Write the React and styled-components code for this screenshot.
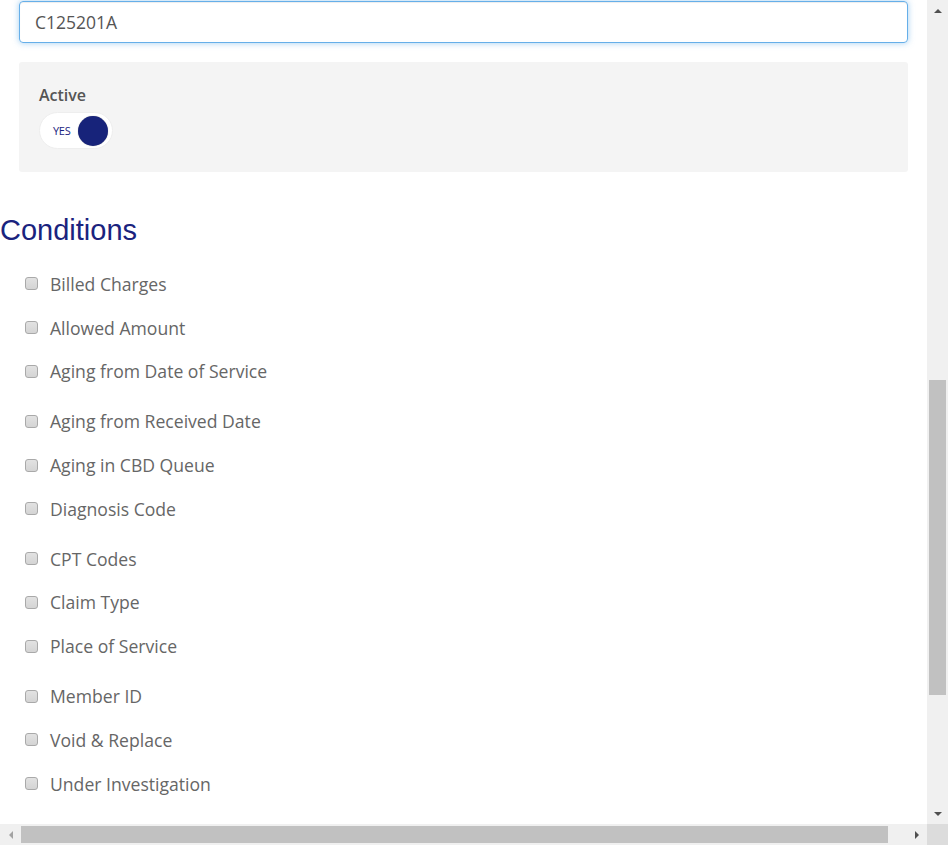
import styled, { createGlobalStyle } from "styled-components";

const GlobalStyle = createGlobalStyle`
  html, body {
    margin: 0;
    padding: 0;
    overflow: hidden;
    background: #fff;
  }
  * {
    box-sizing: border-box;
  }
`;

const Frame = styled.div`
  display: grid;
  grid-template-columns: 927px 21px;
  grid-template-rows: 824px 21px;
  width: 948px;
  height: 845px;
`;

const Viewport = styled.div`
  overflow: hidden;
  font-family: "Open Sans", "Liberation Sans", sans-serif;
`;

const VTrack = styled.div`
  background: #f0f0f0;
  display: grid;
  grid-template-rows: 21px 1fr 21px;
  justify-items: center;
  align-items: center;
`;

const HTrack = styled.div`
  background: #f0f0f0;
  display: grid;
  grid-template-columns: 21px 1fr 21px;
  justify-items: center;
  align-items: center;
`;

const Corner = styled.div`
  background: #dcdcdc;
`;

const VThumbArea = styled.div`
  align-self: stretch;
  width: 17px;
  padding-top: 359px;
  padding-bottom: 108px;
  display: flex;
`;

const HThumbArea = styled.div`
  justify-self: stretch;
  height: 17px;
  padding-right: 18px;
  display: flex;
`;

const Thumb = styled.div`
  flex: 1;
  background: #c1c1c1;
`;

const Arrow = styled.div`
  width: 0;
  height: 0;
  border: 4px solid transparent;
  ${(p) => p.$dir === "up" && "border-bottom: 4px solid #505050; border-top: 0;"}
  ${(p) => p.$dir === "down" && "border-top: 4px solid #505050; border-bottom: 0;"}
  ${(p) => p.$dir === "left" && "border-right: 4px solid #a3a3a3; border-left: 0;"}
  ${(p) => p.$dir === "right" && "border-left: 4px solid #505050; border-right: 0;"}
`;

const Form = styled.div`
  padding: 1px 19px 0 19px;
`;

const TextInput = styled.div`
  height: 42px;
  border: 1px solid #66afe9;
  border-radius: 4px;
  box-shadow: inset 0 1px 1px rgba(0, 0, 0, 0.075), 0 0 6px rgba(102, 175, 233, 0.6);
  padding: 0 15px;
  display: flex;
  align-items: center;
  font-size: 17.5px;
  color: #555;
`;

const Panel = styled.div`
  margin-top: 19px;
  height: 110px;
  background: #f4f4f4;
  border-radius: 3px;
  padding: 22px 20px 0;
`;

const PanelLabel = styled.div`
  font-size: 16px;
  font-weight: 600;
  color: #555;
  line-height: 22px;
`;

const Toggle = styled.div`
  margin-top: 6px;
  width: 74px;
  height: 37px;
  border-radius: 19px;
  background: #fff;
  border: 1px solid #eee;
  display: flex;
  align-items: center;
  padding: 0 4px 0 13px;
  gap: 4px;
`;

const ToggleText = styled.span`
  font-size: 11px;
  color: #1a237e;
  letter-spacing: -0.3px;
`;

const Knob = styled.span`
  width: 30px;
  height: 30px;
  border-radius: 50%;
  background: #17237a;
  box-shadow: 0 0 1px rgba(0, 0, 0, 0.4);
  margin-left: auto;
`;

const Heading = styled.h2`
  margin: 40px 0 0;
  font-family: "Liberation Sans", Arial, sans-serif;
  font-weight: 400;
  font-size: 29px;
  line-height: 36px;
  color: #1a237e;
`;

const List = styled.div`
  padding: 14px 0 0 25px;
  display: flex;
  flex-direction: column;
`;

const Item = styled.label`
  display: flex;
  align-items: center;
  gap: 12px;
  height: 43.8px;
  margin-bottom: ${(p) => (p.$gap ? "6px" : "0")};
  font-size: 17.6px;
  color: #666;
`;

const Box = styled.span`
  width: 13px;
  height: 13px;
  border: 1px solid #a9a9a9;
  border-radius: 3px;
  background: linear-gradient(#e2e2e2, #d4d4d4);
  flex-shrink: 0;
`;

const conditions = [
  "Billed Charges",
  "Allowed Amount",
  "Aging from Date of Service",
  "Aging from Received Date",
  "Aging in CBD Queue",
  "Diagnosis Code",
  "CPT Codes",
  "Claim Type",
  "Place of Service",
  "Member ID",
  "Void & Replace",
  "Under Investigation",
];

export default function App() {
  return (
    <>
      <GlobalStyle />
      <Frame>
        <Viewport>
          <Form>
            <TextInput>C125201A</TextInput>
            <Panel>
              <PanelLabel>Active</PanelLabel>
              <Toggle>
                <ToggleText>YES</ToggleText>
                <Knob />
              </Toggle>
            </Panel>
          </Form>
          <Heading>Conditions</Heading>
          <List>
            {conditions.map((c, i) => (
              <Item key={c} $gap={i % 3 === 2}>
                <Box />
                {c}
              </Item>
            ))}
          </List>
        </Viewport>
        <VTrack>
          <Arrow $dir="up" />
          <VThumbArea>
            <Thumb />
          </VThumbArea>
          <Arrow $dir="down" />
        </VTrack>
        <HTrack>
          <Arrow $dir="left" />
          <HThumbArea>
            <Thumb />
          </HThumbArea>
          <Arrow $dir="right" />
        </HTrack>
        <Corner />
      </Frame>
    </>
  );
}
